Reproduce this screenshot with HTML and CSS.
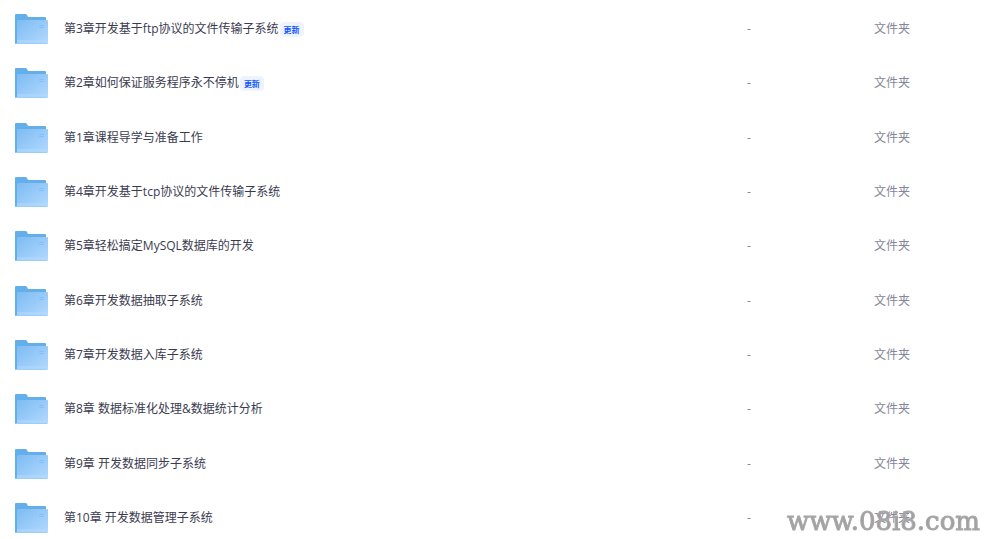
FILE: index.html
```html
<!DOCTYPE html>
<html lang="zh-CN">
<head>
<meta charset="utf-8">
<title>文件列表</title>
<link rel="stylesheet" href="styles.css">
</head>
<body>
<svg class="defs" aria-hidden="true">
  <defs>
    <linearGradient id="front" x1="0" y1="0" x2="1" y2="1">
      <stop offset="0" stop-color="#7dbcf2"/>
      <stop offset="1" stop-color="#b3d9ff"/>
    </linearGradient>
    <symbol id="folder" viewBox="0 0 33 30">
      <path d="M0 1q0-1 1-1h9.500q1 0 1.500 1l1 2h17q1 0 1 1v20H2v6H1q-1 0-1-1z" fill="#62afeb"/>
      <path d="M2 7q0-1 1-1h29q1 0 1 1v22q0 1-1 1H2z" fill="url(#front)"/>
      <path d="M2 26h31v3H2z" fill="#b6dcff" opacity=".45"/>
      <path d="M1 29h31v1H1z" fill="#9bcdf8"/>
      <path d="M24 11h5v1h-5zM24 13h5v1h-5z" fill="#84bff5"/>
    </symbol>
  </defs>
</svg>
<table class="files">
  <tbody>
    <tr><td class="icon"><svg class="folder"><use href="#folder"/></svg></td><td class="name">第3章开发基于ftp协议的文件传输子系统<span class="badge">更新</span></td><td class="size">-</td><td class="type">文件夹</td></tr>
    <tr><td class="icon"><svg class="folder"><use href="#folder"/></svg></td><td class="name">第2章如何保证服务程序永不停机<span class="badge">更新</span></td><td class="size">-</td><td class="type">文件夹</td></tr>
    <tr><td class="icon"><svg class="folder"><use href="#folder"/></svg></td><td class="name">第1章课程导学与准备工作</td><td class="size">-</td><td class="type">文件夹</td></tr>
    <tr><td class="icon"><svg class="folder"><use href="#folder"/></svg></td><td class="name">第4章开发基于tcp协议的文件传输子系统</td><td class="size">-</td><td class="type">文件夹</td></tr>
    <tr><td class="icon"><svg class="folder"><use href="#folder"/></svg></td><td class="name">第5章轻松搞定MySQL数据库的开发</td><td class="size">-</td><td class="type">文件夹</td></tr>
    <tr><td class="icon"><svg class="folder"><use href="#folder"/></svg></td><td class="name">第6章开发数据抽取子系统</td><td class="size">-</td><td class="type">文件夹</td></tr>
    <tr><td class="icon"><svg class="folder"><use href="#folder"/></svg></td><td class="name">第7章开发数据入库子系统</td><td class="size">-</td><td class="type">文件夹</td></tr>
    <tr><td class="icon"><svg class="folder"><use href="#folder"/></svg></td><td class="name">第8章 数据标准化处理&amp;数据统计分析</td><td class="size">-</td><td class="type">文件夹</td></tr>
    <tr><td class="icon"><svg class="folder"><use href="#folder"/></svg></td><td class="name">第9章 开发数据同步子系统</td><td class="size">-</td><td class="type">文件夹</td></tr>
    <tr><td class="icon"><svg class="folder"><use href="#folder"/></svg></td><td class="name">第10章 开发数据管理子系统</td><td class="size">-</td><td class="type">文件夹</td></tr>
  </tbody>
</table>
<div class="watermark">www.08i8.com</div>
</body>
</html>
```
FILE: styles.css
```css
html {
  scrollbar-width: none;
}

body {
  margin: 0;
  padding-top: 2px;
  background: #fff;
  color: #3a3b50;
  font: 12px/18px "Open Sans", "Noto Sans CJK SC", sans-serif;
}

.defs {
  position: absolute;
  width: 0;
  height: 0;
}

.files {
  width: 100%;
  height: 543px;
  border-collapse: collapse;
  table-layout: fixed;
}

.files td {
  padding: 0;
  vertical-align: middle;
}

.files .icon {
  width: 64px;
}

.folder {
  display: block;
  width: 33px;
  height: 30px;
  margin-left: 15px;
}

.files .name {
  white-space: nowrap;
}

.files .size {
  width: 127px;
  color: #85869a;
}

.files .type {
  width: 126px;
  color: #85869a;
}

.badge {
  display: inline-block;
  margin-left: 1px;
  padding: 0 4px;
  border-radius: 4px;
  background: #eef3ff;
  color: #0d53ff;
  font-size: 8px;
  font-weight: 700;
  line-height: 15px;
  vertical-align: 0;
}

.watermark {
  position: fixed;
  right: 20px;
  bottom: 3px;
  color: #a0a0a0;
  font: 26px/30px "DejaVu Serif", serif;
  -webkit-text-stroke: 1px #a8a8a8;
}
```
